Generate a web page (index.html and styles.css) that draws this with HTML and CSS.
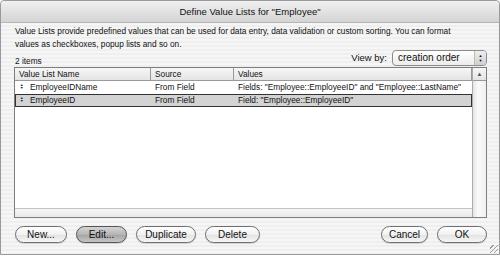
FILE: index.html
```html
<!DOCTYPE html>
<html lang="en">
<head>
  <meta charset="UTF-8" />
  <title>Define Value Lists</title>
  <link rel="stylesheet" href="styles.css">
</head>
<body>
  <div class="window">
    <div class="titlebar">Define Value Lists for "Employee"</div>

    <div class="content">
      <p class="intro">Value Lists provide predefined values that can be used for data entry, data validation or custom sorting. You can format values as checkboxes, popup lists and so on.</p>

      <div class="toolbar">
        <span>2 items</span>
        <div class="viewby">
          <span>View by:</span>
          <div class="popup">
            <span>creation order</span>
            <span class="arrows">&#9650;<br>&#9660;</span>
          </div>
        </div>
      </div>

      <!-- liste -->
      <div class="list">
        <div class="list-main">
          <div class="row head">
            <div class="col name">Value List Name</div>
            <div class="col source">Source</div>
            <div class="col values">Values</div>
          </div>
          <div class="row">
            <div class="col name"><span class="grip">&#9650;<br>&#9660;</span>EmployeeIDName</div>
            <div class="col source">From Field</div>
            <div class="col values">Fields: "Employee::EmployeeID" and "Employee::LastName"</div>
          </div>
          <div class="row selected">
            <div class="col name"><span class="grip">&#9650;<br>&#9660;</span>EmployeeID</div>
            <div class="col source">From Field</div>
            <div class="col values">Field: "Employee::EmployeeID"</div>
          </div>
          <div class="list-fill"></div>
          <div class="hscroll"></div>
        </div>
        <div class="vscroll">
          <div class="vscroll-top">&#9650;</div>
          <div class="vscroll-track"></div>
        </div>
      </div>

      <div class="buttons">
        <div class="left">
          <button class="btn w-new">New...</button>
          <button class="btn dark w-edit">Edit...</button>
          <button class="btn w-dup">Duplicate</button>
          <button class="btn w-del">Delete</button>
        </div>
        <div class="right">
          <button class="btn w-cancel">Cancel</button>
          <button class="btn w-ok">OK</button>
        </div>
      </div>
    </div>
    <div class="grow"></div>
  </div>
</body>
</html>
```

FILE: styles.css
```css
body {
  margin: 0;
  padding: 0;
  background: #fff;
  font-family: "Liberation Sans", Arial, sans-serif;
  font-size: 8.3px;
  color: #111;
}
.window {
  position: relative;
  width: 498px;
  height: 253px;
  border: 1px solid #9a9a9a;
  border-top-left-radius: 4px;
  border-top-right-radius: 4px;
  background: repeating-linear-gradient(to bottom, #efefef 0, #efefef 2px, #f6f6f6 2px, #f6f6f6 4px);
  box-shadow: 0 1px 0 #c8c8c8;
}
.titlebar {
  height: 21px;
  line-height: 21px;
  text-align: center;
  font-size: 9.5px;
  color: #111;
  background: linear-gradient(to bottom, #f0f0f0, #d4d4d4);
  border-bottom: 1px solid #b5b5b5;
  border-top-left-radius: 4px;
  border-top-right-radius: 4px;
}
.content {
  padding: 0 12px 0 13px;
}
.intro {
  max-width: 452px;
  margin: 2px 0 0 1px;
  line-height: 13px;
}
/* ligne 2 items + view by */
.toolbar {
  display: flex;
  justify-content: space-between;
  align-items: flex-end;
  height: 15px;
  padding-left: 1px;
  line-height: 10px;
}
.viewby {
  display: flex;
  align-items: center;
  gap: 5px;
  font-size: 9.5px;
}
.popup {
  display: flex;
  justify-content: space-between;
  align-items: center;
  width: 95px;
  height: 16px;
  border: 1px solid #8c8c8c;
  border-radius: 4px;
  background: linear-gradient(to bottom, #fff, #ececec);
  padding-left: 5px;
  box-sizing: border-box;
  font-size: 10px;
}
.arrows {
  width: 12px;
  height: 14px;
  font-size: 4px;
  line-height: 5px;
  text-align: center;
  padding-top: 2px;
  box-sizing: border-box;
  border-left: 1px solid #bbb;
  background: linear-gradient(to bottom, #eee, #cfcfcf);
  border-radius: 0 3px 3px 0;
}
.list {
  display: flex;
  height: 151px;
  margin-top: 1px;
  border: 1px solid #7d7d7d;
  background: #fff;
  box-sizing: border-box;
}
.list-main {
  flex: 1;
  display: flex;
  flex-direction: column;
}
.row {
  display: flex;
  height: 13px;
  line-height: 13px;
  white-space: nowrap;
}
.row.head {
  height: 12px;
  line-height: 12px;
  background: linear-gradient(to bottom, #f6f6f6, #e4e4e4);
  border-bottom: 1px solid #999;
}
.row.head .col {
  border-right: 1px solid #9a9a9a;
}
.row.selected {
  background: #d3d3d3;
  outline: 1px solid #333;
  outline-offset: -1px;
}
.col {
  box-sizing: border-box;
  padding-left: 4px;
  overflow: hidden;
}
.name { width: 136px; }
.source { width: 83px; }
.values { flex: 1; }
.grip {
  display: inline-block;
  width: 10px;
  font-size: 3.5px;
  line-height: 3px;
  vertical-align: 1px;
  margin-left: 1px;
}
.list-fill {
  flex: 1;
}
.hscroll {
  height: 8px;
  border-top: 1px solid #c4c4c4;
  background: linear-gradient(to bottom, #f7f7f7, #e9e9e9);
}
.vscroll {
  width: 13px;
  display: flex;
  flex-direction: column;
  border-left: 1px solid #aaa;
}
.vscroll-top {
  height: 12px;
  line-height: 12px;
  font-size: 6px;
  text-align: center;
  color: #555;
  background: linear-gradient(to bottom, #f6f6f6, #e4e4e4);
  border-bottom: 1px solid #999;
}
.vscroll-track {
  flex: 1;
  background: linear-gradient(to right, #e6e6e6, #fafafa 40%, #f0f0f0);
}
.buttons {
  display: flex;
  justify-content: space-between;
  margin-top: 8px;
  padding: 0 0 0 1px;
}
.left, .right {
  display: flex;
  gap: 9px;
}
.btn {
  height: 17px;
  padding: 0;
  border: 1px solid #6f6f6f;
  border-radius: 9px;
  background: linear-gradient(to bottom, #ffffff, #f1f1f1 50%, #e2e2e2 51%, #f6f6f6);
  font-family: "Liberation Sans", Arial, sans-serif;
  font-size: 10px;
  color: #111;
  box-shadow: 0 1px 1px rgba(0, 0, 0, 0.15);
}
.btn.dark {
  background: linear-gradient(to bottom, #d4d4d4, #b5b5b5 50%, #a3a3a3 51%, #c6c6c6);
  border-color: #555;
}
.w-new { width: 52px; }
.w-edit { width: 51px; }
.w-dup { width: 60px; }
.w-del { width: 55px; }
.w-cancel { width: 47px; }
.w-ok { width: 50px; }
.grow {
  position: absolute;
  right: 1px;
  bottom: 1px;
  width: 8px;
  height: 8px;
  background: repeating-linear-gradient(135deg, transparent 0, transparent 2px, #999 2px, #999 3px);
}
```
